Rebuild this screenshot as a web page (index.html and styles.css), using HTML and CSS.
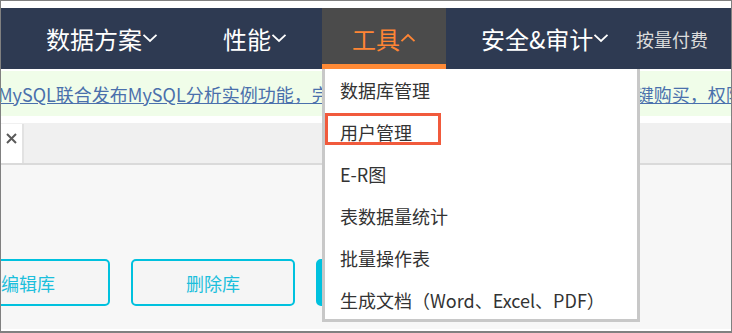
FILE: index.html
```html
<!DOCTYPE html>
<html lang="zh-CN">
<head>
<meta charset="utf-8">
<title>工具菜单</title>
<link rel="stylesheet" href="styles.css">
</head>
<body>
<div class="frame">
  <nav class="nav">
    <div class="nav-item">数据方案<svg class="chev" viewBox="0 0 16 10" width="16" height="10"><path d="M1.5 1.8 L8 8 L14.5 1.8"/></svg></div>
    <div class="nav-item">性能<svg class="chev" viewBox="0 0 16 10" width="16" height="10"><path d="M1.5 1.8 L8 8 L14.5 1.8"/></svg></div>
    <div class="nav-item active">工具<svg class="chev" viewBox="0 0 16 10" width="16" height="10"><path d="M1.5 8.2 L8 2 L14.5 8.2"/></svg>
      <ul class="dropdown">
        <li>数据库管理</li>
        <li class="marked">用户管理<span class="mark"></span></li>
        <li>E-R图</li>
        <li>表数据量统计</li>
        <li>批量操作表</li>
        <li>生成文档（Word、Excel、PDF）</li>
      </ul>
    </div>
    <div class="nav-item last">安全&amp;审计<svg class="chev" viewBox="0 0 16 10" width="16" height="10"><path d="M1.5 1.8 L8 8 L14.5 1.8"/></svg></div>
    <div class="nav-plain">按量付费</div>
  </nav>
  <div class="notice"><a class="notice-link">MySQL联合发布MySQL分析实例功能，完美解决海量数据复杂查询分析难题，一键购买，权限管理一步到位</a></div>
  <div class="tabs">
    <div class="tab"><svg class="close" viewBox="0 0 11 11" width="11" height="11"><path d="M1 1 L10 10 M10 1 L1 10"/></svg></div>
  </div>
  <div class="content">
    <div class="btns">
      <button class="btn">编辑库</button>
      <button class="btn">删除库</button>
      <button class="btn primary">新建库</button>
    </div>
  </div>
</div>
</body>
</html>
```
FILE: styles.css
```css
html, body {
  margin: 0;
  padding: 0;
  background: #ffffff;
}
body {
  font-family: "Noto Sans CJK SC", "Microsoft YaHei", sans-serif;
}
.frame {
  width: 732px;
  height: 333px;
  box-sizing: border-box;
  border: 1px solid #808080;
  border-bottom-width: 2px;
  padding-top: 7px;
  background: #ffffff;
  overflow: hidden;
}
.nav {
  height: 61px;
  background: #2e3a52;
  display: flex;
  align-items: stretch;
  gap: 5px;
  padding-left: 15px;
}
.nav-item {
  position: relative;
  flex: none;
  display: flex;
  align-items: center;
  padding: 0 30px;
  font-size: 24px;
  color: #ffffff;
  white-space: nowrap;
}
.nav-item.last {
  padding-right: 0;
}
.chev {
  fill: none;
  stroke: currentColor;
  stroke-width: 1.8;
  margin-top: -1px;
}
.nav-item.active {
  background: #4b4b4b;
  color: #ff8534;
  box-shadow: inset 0 -5px 0 #ff8a36;
}
.nav-plain {
  flex: none;
  margin-left: auto;
  padding-right: 23px;
  display: flex;
  align-items: center;
  font-size: 18px;
  color: #dcdcdc;
  white-space: nowrap;
}
.dropdown {
  position: absolute;
  top: 100%;
  left: 0;
  width: 318px;
  box-sizing: border-box;
  margin: 0;
  padding: 0;
  list-style: none;
  background: #ffffff;
  border: 3px solid #c8c8c8;
  border-top: none;
  z-index: 10;
}
.dropdown li {
  position: relative;
  height: 42px;
  line-height: 42px;
  padding-left: 15px;
  font-size: 18px;
  color: #333333;
}
.dropdown li:last-child {
  height: 40px;
}
.mark {
  position: absolute;
  left: 0;
  top: 2px;
  width: 116px;
  height: 32px;
  box-sizing: border-box;
  border: 3px solid #f15a3c;
}
.notice {
  margin-top: 2px;
  height: 45px;
  box-sizing: border-box;
  padding-top: 2px;
  line-height: 43px;
  background: #f0fde9;
  white-space: nowrap;
  overflow: hidden;
  font-size: 18px;
}
.notice-link {
  display: inline-block;
  margin-left: -3px;
  color: #4a70ac;
  text-decoration: underline;
}
.tabs {
  margin-top: 7px;
  height: 42px;
  box-sizing: border-box;
  padding-top: 1px;
  background: #f0f0f0;
  border-bottom: 2px solid #dadada;
  display: flex;
}
.tab {
  width: 21px;
  background: #ffffff;
  border-right: 2px solid #e2e2e2;
  display: flex;
  justify-content: center;
  align-items: flex-start;
  padding-top: 9px;
}
.close {
  fill: none;
  stroke: #5a5a5a;
  stroke-width: 2;
}
.content {
  height: 164px;
  box-sizing: border-box;
  background: #f7f7f7;
  padding-top: 94px;
}
.btns {
  display: flex;
  gap: 21px;
  margin-left: -55px;
}
.btn {
  flex: none;
  width: 164px;
  height: 47px;
  box-sizing: border-box;
  border: 2px solid #00c1de;
  border-radius: 5px;
  background: #f5f5f5;
  color: #1cbfdc;
  font-family: inherit;
  font-size: 18px;
  padding: 0;
}
.btn.primary {
  background: #00c1de;
  color: #ffffff;
}
```
